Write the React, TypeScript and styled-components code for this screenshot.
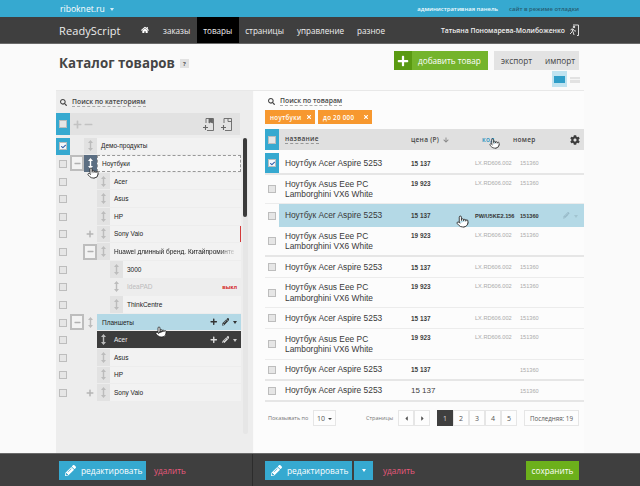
import React from "react";
import styled, { createGlobalStyle } from "styled-components";
import { FaHome, FaCog, FaSearch, FaPlus, FaMinus, FaPencilAlt, FaTimes, FaArrowDown, FaCheck, FaCaretLeft, FaCaretRight } from "react-icons/fa";
import { Pointer } from "lucide-react";

const Global = createGlobalStyle`
  html, body { margin: 0; padding: 0; background: #fafafa; }
  #root { width: 640px; height: 486px; overflow: hidden; }
  * { box-sizing: border-box; }
`;

const Page = styled.div`
  position: relative; width: 640px; height: 486px; display: flex; flex-direction: column;
  font-family: "Open Sans", "Liberation Sans", sans-serif; color: #333; overflow: hidden; background: #fafafa;
`;
const TopBar = styled.div`
  height: 17px; background: #36a9d0; display: flex; align-items: center; justify-content: space-between; padding: 0 61px 0 60px; font-size: 8px; color: #fff;
`;
const Domain = styled.span`font-size: 8.6px; display: flex; align-items: center; gap: 5px;`;
const Caret = styled.i<{ $c?: string; $s?: number }>`
  display: inline-block; width: 0; height: 0; margin-top: 1px;
  border-left: ${(p) => p.$s ?? 2.5}px solid transparent; border-right: ${(p) => p.$s ?? 2.5}px solid transparent;
  border-top: ${(p) => (p.$s ?? 2.5) + 0.5}px solid ${(p) => p.$c ?? "#d5eef7"};
`;
const TopLinks = styled.div`display: flex; gap: 11px; font-size: 5.9px; font-weight: 600;`;
const TopLink = styled.span<{ $dark?: boolean }>`color: ${(p) => (p.$dark ? "#275d73" : "#f2fbff")};`;

const NavBar = styled.div`
  height: 27px; background: #3f3f3f; border-bottom: 1px solid #6a6a6a; display: flex; align-items: stretch; padding: 0 61px 0 59px; color: #eee;
`;
const Logo = styled.div`font-size: 11px; width: 78px; display: flex; align-items: center; color: #ececec; letter-spacing: 0.1px;`;
const HomeIcon = styled.div`width: 19.5px; font-size: 8px; display: flex; align-items: center; color: #fff; padding-left: 4px;`;
const NavItem = styled.div<{ $active?: boolean }>`
  font-size: 8.1px; display: flex; align-items: center; padding: 0 6.5px; color: #efefef;
  background: ${(p) => (p.$active ? "#000" : "transparent")};
`;
const UserBox = styled.div`margin-left: auto; display: flex; align-items: center; gap: 5px; font-size: 6.8px; color: #f0f0f0; font-weight: 600;`;

const Head = styled.div`height: 46px; padding: 7px 61px 0 59px; display: flex; flex-direction: column;`;
const HeadRow = styled.div`display: flex; align-items: flex-start;`;
const Title = styled.h1`margin: 3px 0 0; font-size: 13.3px; line-height: 19px; font-weight: 700; color: #454545;`;
const Help = styled.span`width: 9px; height: 9px; background: #e2e2e2; color: #555; font-size: 6px; font-weight: 700; display: flex; align-items: center; justify-content: center; margin: 8px 0 0 5px;`;
const AddButton = styled.div`margin-left: auto; width: 94px; height: 19px; background: #74b42c; color: #fff; display: flex; font-size: 8.2px; align-items: center;`;
const AddIcon = styled.span`width: 18px; height: 19px; background: #5a9a12; color: #fff; font-size: 12px; display: flex; align-items: center; justify-content: center; margin-right: 6px;`;
const ExportBox = styled.div`margin-left: 6px; width: 85px; height: 19px; background: #e3e3e3; color: #444; font-size: 8.2px; display: flex; align-items: center; justify-content: space-between; padding: 0 4px 0 7px;`;
const ViewRow = styled.div`display: flex; justify-content: flex-end; margin-top: -2px; margin-right: -1px;`;
const ViewActive = styled.span`width: 15px; height: 16px; background: #bfe3f0; display: flex; align-items: center; justify-content: center;`;
const ViewActiveIcon = styled.span`width: 11px; height: 7px; background: #2f9ec8;`;
const ViewOther = styled.span`width: 10px; height: 6px; margin: 6px 0 0 3px; border-top: 2px solid #e2e2e2; border-bottom: 3px solid #e2e2e2; background: #f5f5f5;`;

const Content = styled.div`flex: 1; min-height: 0; display: flex; margin-left: 56px; width: 528px; border-top: 1px solid #e8e8e8;`;
const LeftPanel = styled.div`width: 197px; background: #ededed; display: flex; flex-direction: column;`;
const RightPanel = styled.div`flex: 1; margin-left: 1px; padding-left: 11px; display: flex; flex-direction: column; background: #fcfcfc;`;

const SearchLine = styled.div<{ $h: number; $pad: number; $top?: number }>`
  height: ${(p) => p.$h}px; display: flex; align-items: center; gap: 5px; padding-left: ${(p) => p.$pad}px; padding-top: ${(p) => p.$top ?? 0}px; color: #444; font-size: 7px; flex: none;
`;
const SearchText = styled.span`border-bottom: 1px dashed #aaa; font-size: 6.8px; line-height: 8px; color: #444; font-weight: 600;`;

const TreeToolbar = styled.div`width: 184px; height: 22px; background: #e2e2e2; display: flex; align-items: stretch; flex: none;`;
const BlueCell = styled.div`width: 14px; background: #36a9d0; display: flex; align-items: center; justify-content: center; flex: none;`;
const ToolIcons = styled.div`display: flex; align-items: center; gap: 2px; padding-left: 3px; color: #c2c2c2; font-size: 9px;`;
const DocIcons = styled.div`margin-left: auto; display: flex; align-items: center; gap: 7px; padding-right: 8px;`;

const TreeArea = styled.div`display: flex; margin-top: 2.5px; gap: 2px; flex: 1; min-height: 0;`;
const TreeList = styled.div`width: 185px; flex: none;`;
const Scroll = styled.div`width: 5px; height: 296px; background: #e6e6e6; border-radius: 2px;`;
const Thumb = styled.div`width: 4px; height: 79px; background: #3a3a3a; border-radius: 2px;`;

const TreeRow = styled.div`height: 17.64px; display: flex; align-items: stretch;`;
const CheckCell = styled.div<{ $blue?: boolean }>`
  width: 14px; flex: none; display: flex; align-items: center; justify-content: center; background: ${(p) => (p.$blue ? "#36a9d0" : "transparent")};
`;
const Box = styled.span<{ $checked?: boolean }>`
  width: 8px; height: 8px; flex: none; border: 1px solid #bdbdbd; background: ${(p) => (p.$checked ? "#f4f8fc" : "#e6e6e6")}; display: flex; align-items: center; justify-content: center; color: #2c5aa8; font-size: 5px;
`;
const Track = styled.div<{ $depth: number }>`
  flex: 1; display: flex; min-width: 0; padding-left: ${(p) => p.$depth * 13}px; padding-bottom: 1px;
`;
const Slot = styled.div`width: 14px; flex: none; display: flex; align-items: center; justify-content: center; color: #b5b5b5; font-size: 8px;`;
const ExpandBox = styled.span`width: 14px; height: 16px; border: 2px solid #bdbdbd; background: #f3f3f3; display: flex; align-items: center; justify-content: center; color: #b0b0b0; font-size: 7px; flex: none;`;
const HandleCell = styled.div<{ $variant?: string }>`
  width: 13px; flex: none; display: flex; align-items: center; justify-content: center;
  color: ${(p) => (p.$variant === "focus" ? "#fff" : p.$variant === "dark" ? "#bbb" : "#bcbcbc")};
  background: ${(p) => (p.$variant === "focus" ? "#5b6e82" : p.$variant === "dark" ? "#3c3c3c" : p.$variant === "none" ? "transparent" : "#e2e2e2")};
`;
const RowBody = styled.div<{ $variant?: string; $mark?: boolean }>`
  flex: 1; min-width: 0; display: flex; align-items: center; padding-left: ${(p) => (p.$variant === "blue" ? 5 : 4)}px; padding-right: 4px;
  font-family: "Liberation Sans", Arial, sans-serif; font-size: 6.5px;
  color: ${(p) => (p.$variant === "off" ? "#bbb" : p.$variant === "dark" ? "#eee" : "#222")};
  background: ${(p) => (p.$variant === "off" ? "transparent" : p.$variant === "blue" ? "#b4d9e6" : p.$variant === "dark" ? "#3c3c3c" : p.$variant === "focus" ? "#f6f6f6" : "#f2f2f2")};
  border: ${(p) => (p.$variant === "focus" ? "1px dashed #999" : "none")};
  border-right: ${(p) => (p.$mark ? "1.5px solid #d33a3a" : p.$variant === "focus" ? "1px dashed #999" : "none")};
`;
const RowName = styled.span<{ $fade?: boolean }>`
  flex: 1; min-width: 0; white-space: nowrap;
  ${(p) => (p.$fade ? "mask-image: linear-gradient(to right, #000 85%, transparent);" : "")}
`;
const OffTag = styled.span`color: #d42020; font-size: 5.6px; font-weight: 700;`;
const RowActions = styled.span<{ $c: string }>`display: flex; align-items: center; gap: 4px; color: ${(p) => p.$c}; font-size: 7.5px;`;

const Chips = styled.div`display: flex; gap: 3px; height: 14px; flex: none;`;
const Chip = styled.span<{ $w: number }>`
  width: ${(p) => p.$w}px; background: #f7982f; color: #fff; font-size: 6.2px; font-weight: 600; letter-spacing: 0.3px; display: flex; align-items: center; justify-content: space-between; padding: 0 3px 0 5px; white-space: nowrap;
`;
const TableHead = styled.div`
  margin-top: 5px; height: 21px; background: #e0e0e0; margin-bottom: 3px; flex: none; display: grid; grid-template-columns: 14px 132px 64px 45px 43px 21px; align-items: center; font-size: 6.5px; font-weight: 600; color: #444; letter-spacing: 0.3px;
`;
const HeadBlue = styled.div`height: 21px; background: #36a9d0; display: flex; align-items: center; justify-content: center;`;
const NameHead = styled.span`margin-left: 6px; justify-self: start; border-bottom: 1px dashed #999; line-height: 8px;`;
const PriceHead = styled.span`display: flex; align-items: center; gap: 4px; white-space: nowrap;`;
const CodeHead = styled.span`color: #1f8fbe; margin-left: 7px;`;
const NumHead = styled.span`margin-left: -7px;`;
const Gear = styled.span`color: #3c3c3c; font-size: 10px; display: flex; margin-left: 7px;`;

const TRow = styled.div<{ $h: number; $line: number }>`
  height: ${(p) => p.$h + p.$line}px; flex: none; display: grid; grid-template-columns: 14px 132px 64px 45px 43px 21px;
  align-items: center; border-bottom: ${(p) => p.$line}px solid ${(p) => (p.$line > 1 ? "#e6e6e6" : "#ececec")};
`;
const TCheck = styled.div<{ $blue?: boolean }>`
  align-self: stretch; display: flex; align-items: center; justify-content: center; background: ${(p) => (p.$blue ? "#36a9d0" : "transparent")};
`;
const TName = styled.div<{ $blue?: boolean }>`
  align-self: stretch; display: flex; align-items: center; padding-left: 6px; font-family: "Liberation Sans", Arial, sans-serif; font-size: 8.4px; line-height: 10.4px; color: #3a3a3a;
  background: ${(p) => (p.$blue ? "#b4d9e6" : "transparent")};
`;
const TCell = styled.div<{ $blue?: boolean }>`
  align-self: stretch; display: flex; align-items: center; background: ${(p) => (p.$blue ? "#b4d9e6" : "transparent")};
`;
const TPrice = styled.span<{ $big?: boolean; $top?: boolean }>`
  font-family: "Liberation Sans", Arial, sans-serif; font-size: ${(p) => (p.$big ? 8 : 6.4)}px; font-weight: ${(p) => (p.$big ? 400 : 700)}; color: #3e3e3e;
  align-self: ${(p) => (p.$top ? "flex-start" : "center")}; margin-top: ${(p) => (p.$top ? 5 : 0)}px;
`;
const TCode = styled.span<{ $strong?: boolean; $top?: boolean }>`
  font-family: "Liberation Sans", Arial, sans-serif; font-size: 5.6px; white-space: nowrap; font-weight: ${(p) => (p.$strong ? 700 : 400)}; color: ${(p) => (p.$strong ? "#333" : "#aaa")};
  align-self: ${(p) => (p.$top ? "flex-start" : "center")}; margin-top: ${(p) => (p.$top ? 5 : 0)}px;
`;
const TActions = styled.div`align-self: stretch; background: #b4d9e6; display: flex; align-items: center; gap: 4px; color: #98bac8; font-size: 6.5px;`;

const Pager = styled.div`height: 16px; margin-top: 8px; display: flex; align-items: center; padding-left: 3px; font-size: 5.5px; color: #777; flex: none;`;
const PagerLabel = styled.span<{ $w: number }>`width: ${(p) => p.$w}px; flex: none; white-space: nowrap;`;
const PagerBtn = styled.span<{ $w: number; $on?: boolean; $ml?: number }>`
  width: ${(p) => p.$w}px; height: 16px; flex: none; margin-left: ${(p) => p.$ml ?? 0}px; border: 1px solid ${(p) => (p.$on ? "#3f3f3f" : "#e6e6e6")}; display: flex; align-items: center; justify-content: center; gap: 3px;
  background: ${(p) => (p.$on ? "#3f3f3f" : "#fdfdfd")}; color: ${(p) => (p.$on ? "#ddd" : "#555")}; font-size: 7px; white-space: nowrap;
`;
const LastPage = styled(PagerBtn)`font-size: 6.2px;`;

const Footer = styled.div`height: 33px; flex: none; background: #3f3f3f; border-top: 1px solid #6a6a6a; display: flex;`;
const FootLeft = styled.div`width: 253px; flex: none; border-right: 1px solid #2c2c2c; display: flex; align-items: center; padding-left: 59px;`;
const FootRight = styled.div`flex: 1; display: flex; align-items: center; padding: 0 61px 0 12px;`;
const EditButton = styled.div`width: 87px; height: 19px; background: #36a9d0; color: #fff; font-size: 8.4px; display: flex; align-items: center; gap: 5px; padding-left: 6px; white-space: nowrap;`;
const EditCaret = styled.div`width: 19px; height: 19px; margin-left: 2px; background: #36a9d0; display: flex; align-items: center; justify-content: center;`;
const DeleteLink = styled.span<{ $ml: number }>`margin-left: ${(p) => p.$ml}px; color: #e9587c; font-size: 8.2px;`;
const SaveButton = styled.div`margin-left: auto; width: 53px; height: 19px; background: #6cb01b; color: #fff; font-size: 8.2px; display: flex; align-items: center; justify-content: center;`;

const Cursor = styled.span<{ $x: number; $y: number; $s: number }>`
  position: absolute; left: ${(p) => p.$x}px; top: ${(p) => p.$y}px; width: ${(p) => p.$s}px; height: ${(p) => p.$s}px; display: flex;
`;

const Handle = () => (
  <svg width="5" height="11" viewBox="0 0 5 11"><path d="M2.5 0 5 3H3.2v5H5L2.5 11 0 8h1.8V3H0Z" fill="currentColor" /></svg>
);
const Doc = ({ filled }: { filled?: boolean }) => (
  <svg width="11" height="13" viewBox="0 0 11 13" fill="none" stroke="#666" strokeWidth="0.9">
    <path d="M3 5V.5h7.5v12H4" />
    {filled ? <path d="M6 .5h3.5V5L7.8 4 6 5Z" fill="#666" /> : <path d="M7 .5v3h3.5" />}
    <path d="M0 9.5h5M2.5 7v5" strokeWidth="1.1" />
  </svg>
);
const Logout = () => (
  <svg width="9" height="12" viewBox="0 0 9 12" fill="none" stroke="#eee" strokeWidth="0.9">
    <path d="M3 1h5.5v10.5H7" />
    <path d="M0 10l2-2 1-3 1.5 2H6M3 5H1.5L.8 6.3M3 7.5l1 3.5" />
    <circle cx="4" cy="3" r="0.8" fill="#eee" />
  </svg>
);
const Hand = ({ s }: { s: number }) => <Pointer size={s} fill="#fff" color="#222" strokeWidth={1.6} />;

type Node = { name: string; depth: number; exp?: "plus" | "box"; checked?: boolean; variant?: string; mark?: boolean; fade?: boolean; off?: boolean };
const nodes: Node[] = [
  { name: "Демо-продукты", depth: 0, checked: true },
  { name: "Ноутбуки", depth: 0, exp: "box", variant: "focus" },
  { name: "Acer", depth: 1 },
  { name: "Asus", depth: 1 },
  { name: "HP", depth: 1 },
  { name: "Sony Vaio", depth: 1, exp: "plus", mark: true },
  { name: "Huawei длинный бренд. Китайпроминте", depth: 1, exp: "box", fade: true },
  { name: "3000", depth: 2 },
  { name: "IdeaPAD", depth: 2, variant: "off", off: true },
  { name: "ThinkCentre", depth: 2 },
  { name: "Планшеты", depth: 0, exp: "box", variant: "blue" },
  { name: "Acer", depth: 1, variant: "dark" },
  { name: "Asus", depth: 1 },
  { name: "HP", depth: 1 },
  { name: "Sony Vaio", depth: 1, exp: "plus" },
];

type Prod = { two?: boolean; h: number; line: number; price: string; big?: boolean; code?: string; checked?: boolean; active?: boolean };
const prods: Prod[] = [
  { h: 20, line: 2, price: "15 137", code: "LX.RD606.002", checked: true },
  { two: true, h: 28, line: 1, price: "19 923", code: "LX.RD606.002" },
  { h: 23, line: 0, price: "15 137", code: "PW/U5KE2.156", active: true },
  { two: true, h: 28, line: 2, price: "19 923", code: "LX.RD606.002" },
  { h: 20, line: 1, price: "15 137", code: "LX.RD606.002" },
  { two: true, h: 29, line: 1, price: "19 923", code: "LX.RD606.002" },
  { h: 20, line: 1, price: "15 137", code: "LX.RD606.002" },
  { two: true, h: 30, line: 1, price: "19 923", code: "LX.RD606.002" },
  { h: 19, line: 2, price: "15 137" },
  { h: 19, line: 2, price: "15 137", big: true },
];

const App = () => (
  <Page>
    <Global />
    <TopBar>
      <Domain>riboknet.ru <Caret /></Domain>
      <TopLinks>
        <TopLink>административная панель</TopLink>
        <TopLink $dark>сайт в режиме отладки</TopLink>
      </TopLinks>
    </TopBar>
    <NavBar>
      <Logo>ReadyScript</Logo>
      <HomeIcon><FaHome /></HomeIcon>
      <NavItem>заказы</NavItem>
      <NavItem $active>товары</NavItem>
      <NavItem>страницы</NavItem>
      <NavItem>управление</NavItem>
      <NavItem>разное</NavItem>
      <UserBox>Татьяна Пономарева-Молибоженко <Logout /></UserBox>
    </NavBar>
    <Head>
      <HeadRow>
        <Title>Каталог товаров</Title>
        <Help>?</Help>
        <AddButton><AddIcon><FaPlus /></AddIcon>добавить товар</AddButton>
        <ExportBox><span>экспорт</span><span>импорт</span></ExportBox>
      </HeadRow>
      <ViewRow>
        <ViewActive><ViewActiveIcon /></ViewActive>
        <ViewOther />
      </ViewRow>
    </Head>
    <Content>
      <LeftPanel>
        <SearchLine $h={22} $pad={4}><FaSearch /><SearchText>Поиск по категориям</SearchText></SearchLine>
        <TreeToolbar>
          <BlueCell><Box /></BlueCell>
          <ToolIcons><FaPlus /><FaMinus /></ToolIcons>
          <DocIcons><Doc filled /><Doc /></DocIcons>
        </TreeToolbar>
        <TreeArea>
          <TreeList>
            {nodes.map((n, i) => (
              <TreeRow key={i}>
                <CheckCell $blue={n.checked}><Box $checked={n.checked}>{n.checked && <FaCheck />}</Box></CheckCell>
                <Track $depth={n.depth}>
                  <Slot>
                    {n.exp === "box" && <ExpandBox><FaMinus /></ExpandBox>}
                    {n.exp === "plus" && <FaPlus />}
                  </Slot>
                  <HandleCell $variant={n.variant === "off" || n.variant === "blue" ? "none" : n.variant}><Handle /></HandleCell>
                  <RowBody $variant={n.variant} $mark={n.mark}>
                    <RowName $fade={n.fade}>{n.name}</RowName>
                    {n.off && <OffTag>выкл</OffTag>}
                    {n.variant === "blue" && <RowActions $c="#333"><FaPlus /><FaPencilAlt /><Caret $c="#333" /></RowActions>}
                    {n.variant === "dark" && <RowActions $c="#ddd"><FaPlus /><FaPencilAlt /><Caret $c="#ccc" /></RowActions>}
                  </RowBody>
                </Track>
              </TreeRow>
            ))}
          </TreeList>
          <Scroll><Thumb /></Scroll>
        </TreeArea>
      </LeftPanel>
      <RightPanel>
        <SearchLine $h={19} $pad={3} $top={2}><FaSearch /><SearchText>Поиск по товарам</SearchText></SearchLine>
        <Chips>
          <Chip $w={50}>ноутбуки <FaTimes size={6} /></Chip>
          <Chip $w={54}>до 20 000 <FaTimes size={6} /></Chip>
        </Chips>
        <TableHead>
          <HeadBlue><Box /></HeadBlue>
          <NameHead>название</NameHead>
          <PriceHead>цена (Р) <FaArrowDown color="#888" size={6} /></PriceHead>
          <CodeHead>код</CodeHead>
          <NumHead>номер</NumHead>
          <Gear><FaCog /></Gear>
        </TableHead>
        {prods.map((p, i) => (
          <TRow key={i} $h={p.h} $line={p.line}>
            <TCheck $blue={p.checked}><Box $checked={p.checked}>{p.checked && <FaCheck />}</Box></TCheck>
            <TName $blue={p.active}>
              {p.two ? <span>Ноутбук Asus Eee PC<br />Lamborghini VX6 White</span> : "Ноутбук Acer Aspire 5253"}
            </TName>
            <TCell $blue={p.active}><TPrice $big={p.big} $top={p.two}>{p.price}</TPrice></TCell>
            <TCell $blue={p.active}>{p.code && <TCode $strong={p.active} $top={p.two}>{p.code}</TCode>}</TCell>
            <TCell $blue={p.active}><TCode $strong={p.active} $top={p.two}>151360</TCode></TCell>
            {p.active ? <TActions><FaPencilAlt /><Caret $c="#a2c4d0" /></TActions> : <span />}
          </TRow>
        ))}
        <Pager>
          <PagerLabel $w={45}>Показывать по</PagerLabel>
          <PagerBtn $w={23}>10 <Caret $c="#444" $s={2} /></PagerBtn>
          <PagerLabel $w={30} />
          <PagerLabel $w={30}>Страницы</PagerLabel>
          <PagerBtn $w={16} $ml={2}><FaCaretLeft /></PagerBtn>
          <PagerBtn $w={16}><FaCaretRight /></PagerBtn>
          <PagerBtn $w={16} $ml={7} $on>1</PagerBtn>
          <PagerBtn $w={16}>2</PagerBtn>
          <PagerBtn $w={16}>3</PagerBtn>
          <PagerBtn $w={16}>4</PagerBtn>
          <PagerBtn $w={16}>5</PagerBtn>
          <LastPage $w={55} $ml={7}>Последняя: 19</LastPage>
        </Pager>
      </RightPanel>
    </Content>
    <Footer>
      <FootLeft>
        <EditButton><FaPencilAlt size={11} />редактировать</EditButton>
        <DeleteLink $ml={8}>удалить</DeleteLink>
      </FootLeft>
      <FootRight>
        <EditButton><FaPencilAlt size={11} />редактировать</EditButton>
        <EditCaret><Caret $c="#fff" /></EditCaret>
        <DeleteLink $ml={10}>удалить</DeleteLink>
        <SaveButton>сохранить</SaveButton>
      </FootRight>
    </Footer>
    <Cursor $x={87} $y={167} $s={12}><Hand s={12} /></Cursor>
    <Cursor $x={155} $y={326} $s={12}><Hand s={12} /></Cursor>
    <Cursor $x={489} $y={138} $s={11}><Hand s={11} /></Cursor>
    <Cursor $x={456} $y={215} $s={13}><Hand s={13} /></Cursor>
  </Page>
);

export default App;
